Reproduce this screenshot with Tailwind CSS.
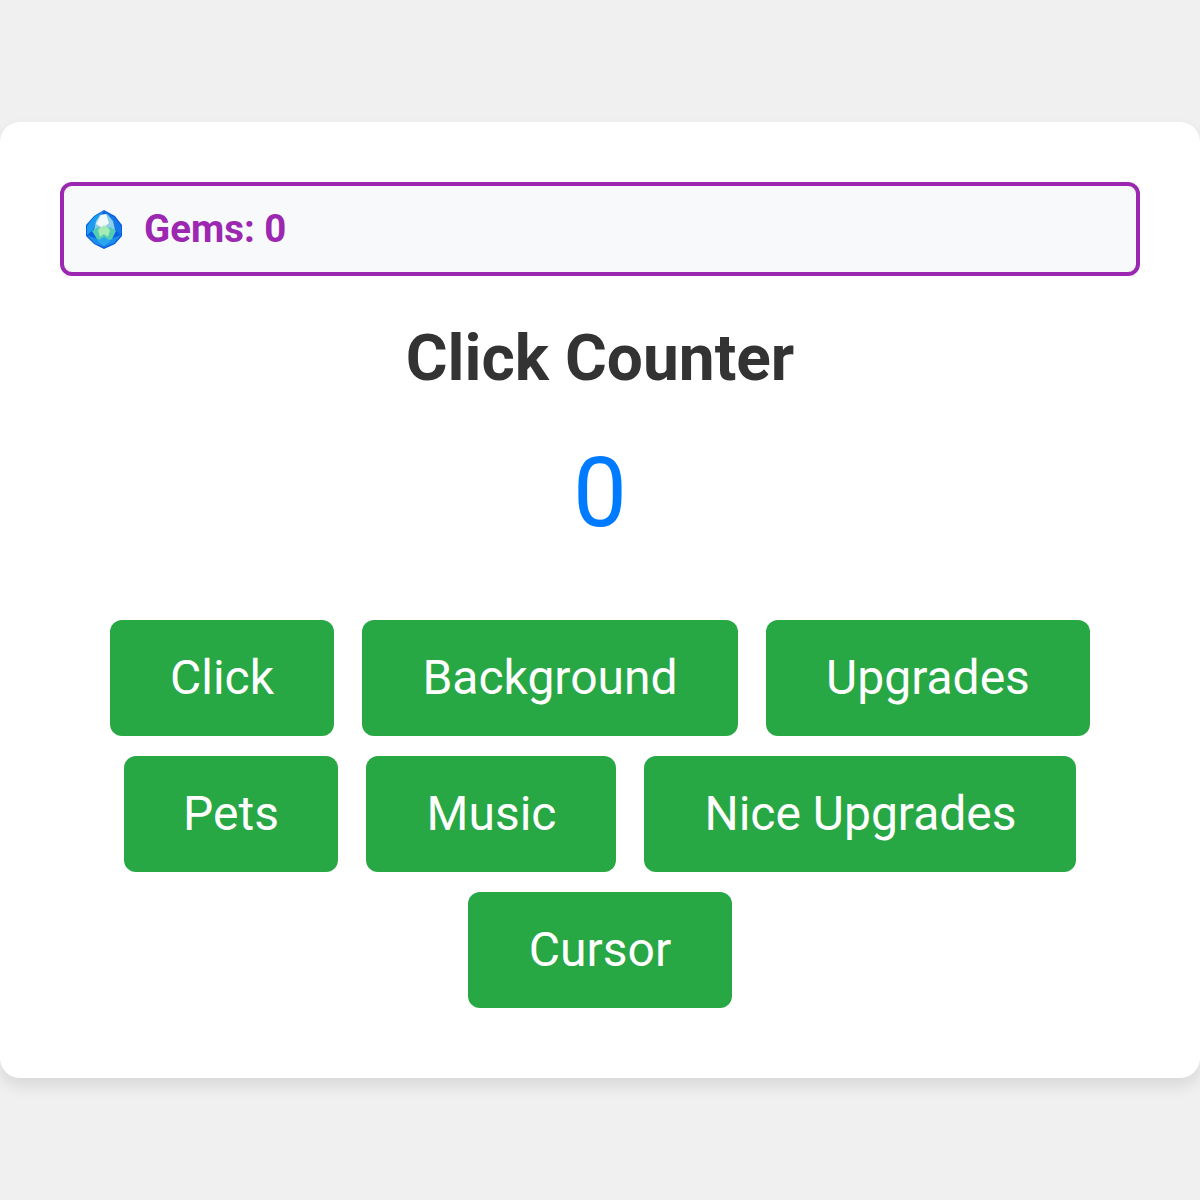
<!DOCTYPE html>
<html lang="en">
<head>
    <meta charset="UTF-8">
    <title>Click Counter</title>
    <script src="https://cdn.jsdelivr.net/npm/@tailwindcss/browser@4"></script>
</head>
<body class="bg-[#f0f0f0] font-['Roboto',sans-serif]">
    <div class="h-[1200px] flex items-center">
        <div class="w-full bg-white rounded-[20px] shadow-[0_8px_16px_rgba(0,0,0,0.1)] px-[60px] pt-[60px] pb-[70px]">
            <!-- Gems -->
            <div class="flex items-center h-[94px] border-4 border-[#9c27b0] rounded-xl bg-[#f8f9fa] pl-[22px]">
                <svg class="w-9 h-[39px] mr-[22px] blur-[0.3px]" viewBox="0 0 36 39">
                    <polygon points="18,0 29,6 36,15 36,26 29,34 18,39 8,34 0,26 0,15 8,6" fill="#0a5fe0"/>
                    <polygon points="18,1 8,7 1,16 1,25 7,20 11,11" fill="#1c9cf0"/>
                    <polygon points="18,1 28,7 35,16 35,25 28,19 24,10" fill="#1478e8"/>
                    <polygon points="1,25 8,33 18,37 28,33 35,25 27,28 18,31 9,28" fill="#1a8cec"/>
                    <polygon points="14,5 21,4 27,11 29,20 18,25 8,20 10,11" fill="#8fcfe6"/>
                    <polygon points="15,5 20,4 23,13 17,18 10,14" fill="#f2f8fa"/>
                    <polygon points="6,21 12,17 18,22 24,17 30,21 26,29 18,33 11,29" fill="#52cdb4"/>
                    <polygon points="12,20 18,15 24,20 22,27 18,24 14,27" fill="#a6ecb2"/>
                    <polygon points="11,31 18,27 25,31 18,36" fill="#2aa6ec"/>
                </svg>
                <span class="text-[38.4px] font-bold text-[#9c27b0]">Gems: 0</span>
            </div>

            <h1 class="mt-[45px] text-center text-[64px] leading-[75px] font-bold text-[#333]">Click Counter</h1>
            <div class="mt-[41px] text-center text-[96px] leading-[112px] text-[#007bff]">0</div>

            <!-- Buttons -->
            <div class="mt-[71px] flex flex-wrap justify-center gap-x-7 gap-y-5">
                <button class="w-[224px] bg-[#28a745] text-white text-[48px] leading-[56px] py-[30px] rounded-xl">Click</button>
                <button class="w-[376px] bg-[#28a745] text-white text-[48px] leading-[56px] py-[30px] rounded-xl">Background</button>
                <button class="w-[324px] bg-[#28a745] text-white text-[48px] leading-[56px] py-[30px] rounded-xl">Upgrades</button>
                <button class="w-[214px] bg-[#28a745] text-white text-[48px] leading-[56px] py-[30px] rounded-xl">Pets</button>
                <button class="w-[250px] pl-[1px] bg-[#28a745] text-white text-[48px] leading-[56px] py-[30px] rounded-xl">Music</button>
                <button class="w-[432px] pl-[1px] bg-[#28a745] text-white text-[48px] leading-[56px] py-[30px] rounded-xl">Nice Upgrades</button>
                <button class="w-[264px] bg-[#28a745] text-white text-[48px] leading-[56px] py-[30px] rounded-xl">Cursor</button>
            </div>
        </div>
    </div>
</body>
</html>
